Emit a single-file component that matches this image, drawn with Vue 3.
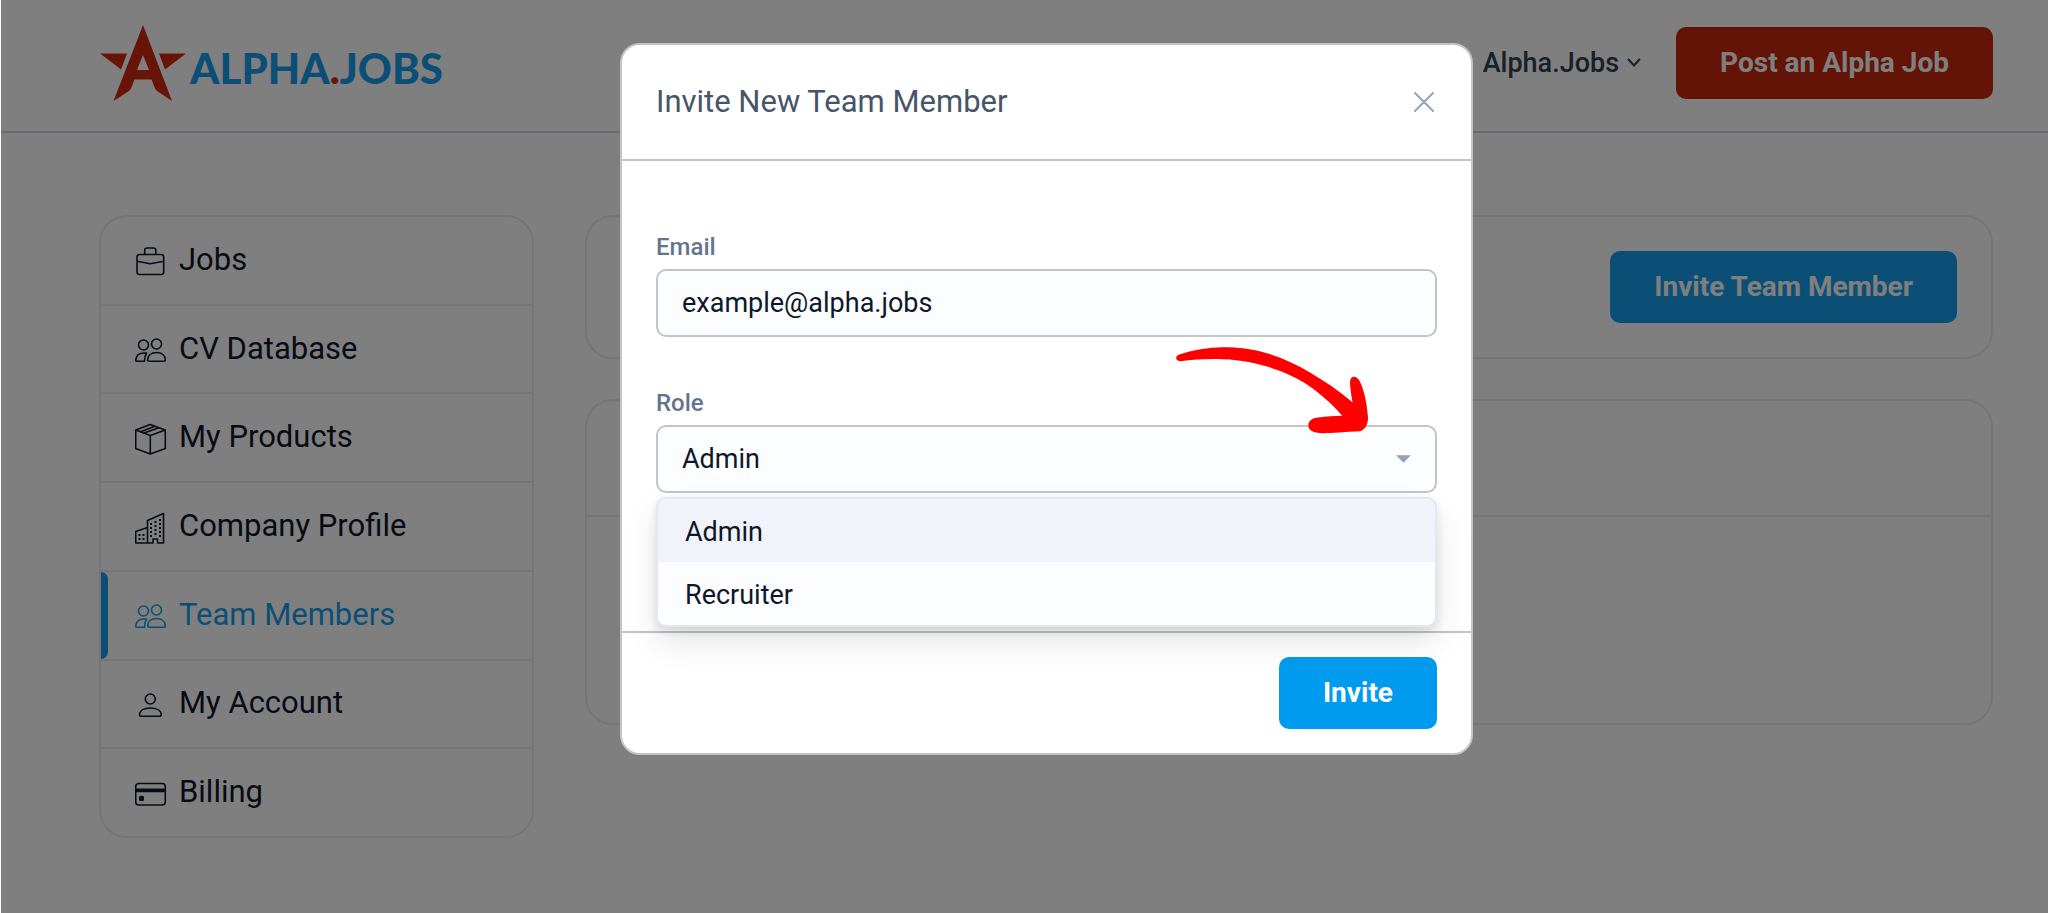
<template>
  <div class="page">
    <header class="topbar">
      <a href="#" class="logo" aria-label="Alpha.Jobs home">
        <svg class="logo-star" viewBox="0 0 86 76" aria-hidden="true">
          <path d="M0 28.500H27L21 44.500Z" />
          <path d="M86 28.500H59L65 44.500Z" />
          <path
            fill-rule="evenodd"
            d="M43 0L72 76L57 66Q55 64 54 61L51.500 54.500H34.500L32 61Q31 64 29 66L13.500 76ZM43 30L37 45H49Z"
          />
        </svg>
        <span class="logo-text">ALPHA<span class="dot">.</span>JOBS</span>
      </a>
      <nav class="top-actions">
        <button class="account-btn" type="button">
          Alpha.Jobs
          <svg class="chevron" viewBox="0 0 14 10" aria-hidden="true">
            <path d="M1.500 1.500L7 7.500L12.500 1.500" />
          </svg>
        </button>
        <button class="btn btn-red" type="button">Post an Alpha Job</button>
      </nav>
    </header>

    <div class="content">
      <aside class="sidebar">
        <a
          v-for="item in menu"
          :key="item.label"
          href="#"
          class="menu-item"
          :class="{ active: item.label === current }"
          @click.prevent="current = item.label"
        >
          <svg class="menu-icon" viewBox="0 0 32 32" aria-hidden="true">
            <path :d="item.icon" />
            <path v-if="item.solid" class="solid" :d="item.solid" />
          </svg>
          <span>{{ item.label }}</span>
        </a>
      </aside>
      <main class="panels">
        <section class="card card-actions">
          <button class="btn btn-sky" type="button" @click="showModal = true">Invite Team Member</button>
        </section>
        <section class="card">
          <div class="card-head"></div>
          <div class="card-body"></div>
        </section>
      </main>
    </div>

    <div v-if="showModal" class="overlay">
      <form class="modal" role="dialog" aria-labelledby="modal-title" @submit.prevent="showModal = false">
        <div class="modal-head">
          <h2 id="modal-title">Invite New Team Member</h2>
          <button class="close-btn" type="button" aria-label="Close" @click="showModal = false">
            <svg viewBox="0 0 20 20" aria-hidden="true">
              <path d="M1 1L19 19M19 1L1 19" />
            </svg>
          </button>
        </div>
        <div class="modal-body">
          <div class="field">
            <label for="email">Email</label>
            <input id="email" v-model="email" type="text" class="control" />
          </div>
          <div class="field">
            <label for="role">Role</label>
            <select id="role" v-model="role" class="control" @mousedown.prevent="open = !open">
              <option v-for="r in roles" :key="r">{{ r }}</option>
            </select>
            <svg class="caret" viewBox="0 0 16 8" aria-hidden="true">
              <path d="M0 0H16L8 8Z" />
            </svg>
            <div v-if="open" class="dropdown">
              <button
                v-for="r in roles"
                :key="r"
                type="button"
                class="dropdown-item"
                :class="{ selected: r === role }"
                @click="pickRole(r)"
              >
                {{ r }}
              </button>
            </div>
            <svg class="pointer" viewBox="0 0 576 260" aria-hidden="true">
              <path
                d="M10 22C50 9 96 0 142 0C190 0 225 5 262 15C310 28 358 49 402 76C448 103 490 132 530 166
                C526 146 523 126 522 108C522 96 526 89 534 89C541 89 548 95 552 104C566 134 573 172 576 212
                C576 232 568 248 552 252C512 254 466 257 440 258C412 258 397 249 397 235C397 221 408 213 427 211
                C450 208 476 207 499 206C476 179 450 155 422 133C386 105 346 84 302 68C254 49 198 38 142 36
                C98 34 54 37 12 42C-3 40 -3 26 10 22Z"
              />
            </svg>
          </div>
        </div>
        <div class="modal-foot">
          <button class="btn btn-blue" type="submit">Invite</button>
        </div>
      </form>
    </div>
  </div>
</template>

<script setup>
import { ref } from 'vue';

const current = ref('Team Members');
const showModal = ref(true);
const open = ref(true);
const email = ref('example@alpha.jobs');
const role = ref('Admin');
const roles = ['Admin', 'Recruiter'];

const people =
  'M13.500 11A5 5 0 1 1 3.500 11A5 5 0 1 1 13.500 11ZM26.500 10A5 5 0 1 1 16.500 10A5 5 0 1 1 26.500 10Z' +
  'M12.700 26.200C12.700 21.500 16.200 18.500 21.500 18.500S30.300 21.500 30.300 26.200Q30.300 27.200 29 27.200H14Q12.700 27.200 12.700 26.200Z' +
  'M11.500 19H9C4 19 1 22 .7 26.200Q.7 27.200 1.700 27.200H9.500C9.500 23.500 10 21.500 11.500 19Z';

const menu = [
  {
    label: 'Jobs',
    icon: 'M4.500 9.500H26Q28.700 9.500 28.700 12V27Q28.700 29.500 26 29.500H4.500Q2 29.500 2 27V12Q2 9.500 4.500 9.500ZM9.700 9.500V5Q9.700 3 12 3H18.500Q20.800 3 20.800 5V9.500M2 16.200L15.300 18.800L28.700 16.200',
  },
  { label: 'CV Database', icon: people },
  {
    label: 'My Products',
    icon: 'M15.300 1.500L30.300 7V25.500L15.300 31L.7 25.500V7ZM.7 7L15.300 12.500L30.300 7M15.300 12.500V31M5.500 8.800L20 3.300M9 10L24 4.700',
  },
  {
    label: 'Company Profile',
    icon: 'M12.500 31V8.500L28.500 1.500V31H22.500V27H18V31H.7V19.500L12.500 15.500',
    solid:
      'M15 11h2v2h-2zM15 15h2v2h-2zM15 19h2v2h-2zM15 23h2v2h-2zM19.500 9h2v2h-2zM19.500 13h2v2h-2zM19.500 17h2v2h-2zM19.500 21h2v2h-2z' +
      'M24 7h2v2h-2zM24 11h2v2h-2zM24 15h2v2h-2zM24 19h2v2h-2zM24 23h2v2h-2zM3.500 22h2v2h-2zM7.500 22h2v2h-2zM3.500 26h2v2h-2zM7.500 26h2v2h-2z',
  },
  { label: 'Team Members', icon: people },
  {
    label: 'My Account',
    icon: 'M20.300 10A5 5 0 1 1 10.300 10A5 5 0 1 1 20.300 10ZM4.500 26C4.500 21.500 9 19 15.400 19S26.300 21.500 26.300 26Q26.300 27.200 25 27.200H6Q4.500 27.200 4.500 26Z',
  },
  {
    label: 'Billing',
    icon: 'M4 5.500H27Q30.300 5.500 30.300 8.500V24Q30.300 27 27 27H4Q.7 27 .7 24V8.500Q.7 5.500 4 5.500Z',
    solid: 'M.7 10.500H30.300V14.300H.7ZM5.500 17.700H7.500Q9 17.700 9 19.200V21.500Q9 23 7.500 23H5.500Q4 23 4 21.500V19.200Q4 17.700 5.500 17.700Z',
  },
];

function pickRole(r) {
  role.value = r;
  open.value = false;
}
</script>

<style>
body {
  margin: 0;
  background: #fff;
}
</style>

<style scoped>
.page {
  position: relative;
  box-sizing: border-box;
  min-height: 100vh;
  border-left: 1px solid #fff;
  font-family: Roboto, "Liberation Sans", sans-serif;
  color: #0f172a;
}
.page *,
.page *::before {
  box-sizing: border-box;
}
button,
input,
select {
  font-family: inherit;
}

/* top bar */
.topbar {
  display: flex;
  align-items: center;
  justify-content: space-between;
  padding: 27px 55px 32px 99px;
  border-bottom: 2px solid #cbd5e1;
}
.logo {
  display: flex;
  align-items: center;
  gap: 4px;
  height: 72px;
  text-decoration: none;
}
.logo-star {
  width: 86px;
  height: 76px;
  fill: #d02812;
}
.logo-text {
  padding-top: 10px;
  font-family: Lato, sans-serif;
  font-size: 42px;
  font-weight: 900;
  line-height: 48px;
  color: #189eed;
}
.dot {
  color: #d02812;
}
.top-actions {
  display: flex;
  align-items: center;
  gap: 35px;
}
.account-btn {
  display: flex;
  align-items: center;
  gap: 8px;
  padding: 0;
  border: none;
  background: none;
  font-size: 27px;
  font-weight: 500;
  color: #334155;
  cursor: pointer;
}
.chevron {
  width: 14px;
  height: 10px;
  fill: none;
  stroke: currentColor;
  stroke-width: 2;
  stroke-linecap: round;
}
.btn {
  height: 72px;
  padding: 0 44px 2px;
  border: none;
  border-radius: 10px;
  font-size: 28px;
  font-weight: 700;
  color: #fff;
  cursor: pointer;
}
.btn-red {
  background: #c8280f;
}
.btn-blue {
  background: #009bee;
}
.btn-sky {
  background: #189eed;
}

/* page body */
.content {
  display: flex;
  align-items: flex-start;
  gap: 51px;
  padding: 82px 55px 75px 98px;
}
.sidebar {
  flex: 0 0 435px;
  display: flex;
  flex-direction: column;
  min-height: 623px;
  overflow: hidden;
  border: 2px solid #e8e8f3;
  border-radius: 28px;
}
.menu-item {
  position: relative;
  flex: 1;
  display: flex;
  align-items: center;
  gap: 12px;
  padding: 0 34px 2px;
  border-bottom: 2px solid #e8e8f3;
  font-size: 31px;
  color: #0f172a;
  text-decoration: none;
}
/* last divider sits on the sidebar's own border */
.menu-item:last-child {
  margin-bottom: -2px;
  border-bottom-color: transparent;
}
.menu-item.active {
  color: #189eed;
}
.menu-item.active::before {
  content: "";
  position: absolute;
  top: 0;
  bottom: 0;
  left: 0;
  width: 7px;
  border-radius: 0 8px 8px 0;
  background: #189eed;
}
.menu-icon {
  width: 32px;
  height: 32px;
  margin-top: 4px;
  fill: none;
  stroke: currentColor;
  stroke-width: 1.600;
  stroke-linejoin: round;
}
.menu-icon .solid {
  fill: currentColor;
  stroke: none;
}
.panels {
  flex: 1;
  display: grid;
  gap: 40px;
}
.card {
  border: 2px solid #e8e8f3;
  border-radius: 28px;
}
.card-actions {
  display: flex;
  justify-content: flex-end;
  padding: 34px;
}
.card-head {
  height: 116px;
  border-bottom: 2px solid #e8e8f3;
}
.card-body {
  height: 206px;
}

/* invite dialog */
.overlay {
  position: absolute;
  inset: 0;
  display: flex;
  align-items: flex-start;
  justify-content: center;
  padding: 43px 0 43px 44px;
  background: rgba(0, 0, 0, 0.5);
}
.modal {
  width: 100%;
  max-width: 853px;
  border: 2px solid #c4c4c4;
  border-radius: 20px;
  background: #fff;
}
.modal-head {
  display: flex;
  align-items: center;
  justify-content: space-between;
  height: 116px;
  padding: 0 34px;
  border-bottom: 2px solid #c4c4c4;
}
.modal-head h2 {
  margin: 0;
  padding-bottom: 2px;
  font-size: 31px;
  font-weight: 400;
  color: #475569;
}
.close-btn {
  display: flex;
  padding: 3px;
  border: none;
  background: none;
  cursor: pointer;
}
.close-btn svg {
  width: 20px;
  height: 20px;
  fill: none;
  stroke: #94a3b8;
  stroke-width: 2;
  stroke-linecap: round;
}
.modal-body {
  display: grid;
  gap: 50px;
  padding: 70px 34px 138px;
}
.field {
  position: relative;
  display: grid;
  gap: 6px;
}
.field label {
  font-size: 24px;
  font-weight: 500;
  line-height: 32px;
  color: #64748b;
}
.control {
  width: 100%;
  height: 68px;
  padding: 0 24px;
  border: 2px solid #c4c4c4;
  border-radius: 10px;
  outline: none;
  background: #fcfdff;
  font-size: 27px;
  color: #0f172a;
  appearance: none;
}
.caret {
  position: absolute;
  right: 26px;
  bottom: 30px;
  width: 15px;
  height: 8px;
  fill: #94a3b8;
  pointer-events: none;
}
.dropdown {
  position: absolute;
  top: 100%;
  left: 0;
  right: 0;
  z-index: 1;
  display: grid;
  margin-top: 4px;
  overflow: hidden;
  border: 2px solid #e2e8f0;
  border-radius: 10px;
  background: #fcfdff;
  box-shadow: 0 16px 32px rgba(0, 0, 0, 0.1), 0 4px 10px rgba(0, 0, 0, 0.1);
}
.dropdown-item {
  height: 63px;
  padding: 2px 27px 0;
  border: none;
  background: none;
  font-size: 27px;
  text-align: left;
  color: #0f172a;
  cursor: pointer;
}
.dropdown-item.selected {
  background: #f0f3f9;
}
/* hand-drawn arrow towards the caret */
.pointer {
  position: absolute;
  right: 69px;
  bottom: 59px;
  z-index: 2;
  width: 192px;
  height: 87px;
  fill: #f00;
  pointer-events: none;
}
.modal-foot {
  display: flex;
  justify-content: flex-end;
  padding: 24px 34px;
  border-top: 2px solid #c4c4c4;
}
</style>
